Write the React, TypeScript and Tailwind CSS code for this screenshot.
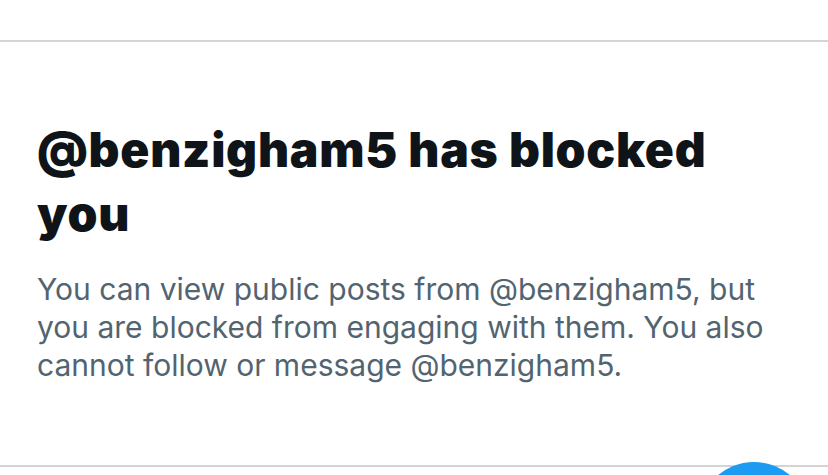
export default function App() {
  return (
    <div className="relative w-[828px] h-[475px] overflow-hidden bg-white" style={{ fontFamily: "Inter, 'Liberation Sans', sans-serif" }}>
      <div className="h-[40px]" />
      <div className="h-[427px] border-t-2 border-b-2 border-[#d4d4d4] flex flex-col">
        <div className="pl-[37px] pr-[10px] pt-[76px] whitespace-nowrap">
          <h1 className="text-[48px] leading-[64px] font-black text-[#0f1419] tracking-[0.75px]">
            @benzigham5 has blocked
            <br />
            you
          </h1>
          <p className="mt-[24px] text-[30px] leading-[38px] text-[#536471]">
            You can view public posts from @benzigham5, but
            <br />
            you are blocked from engaging with them. You also
            <br />
            cannot follow or message @benzigham5.
          </p>
        </div>
      </div>
      <div className="absolute left-[698px] top-[462px] w-[112px] h-[112px] rounded-full bg-[#1d9bf0]" />
    </div>
  );
}
